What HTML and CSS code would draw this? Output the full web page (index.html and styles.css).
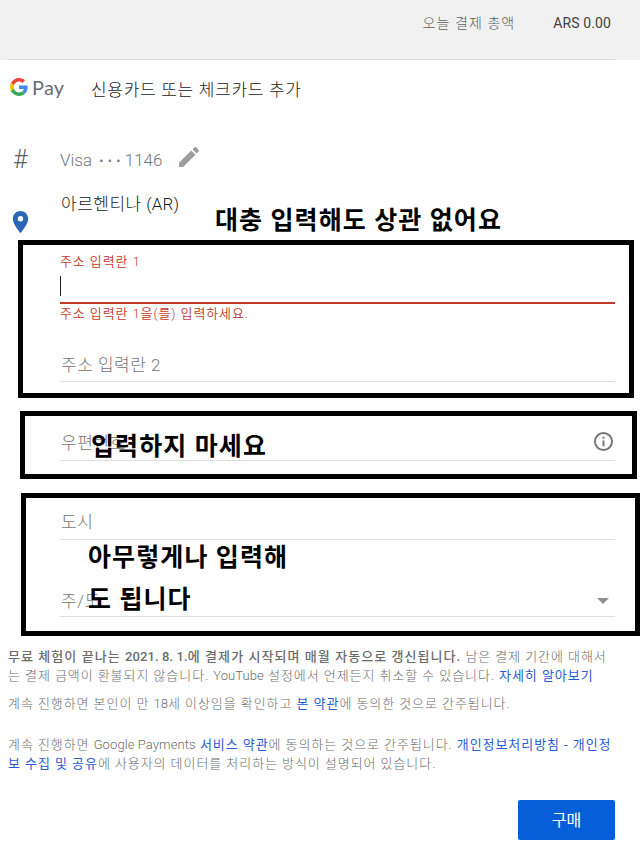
FILE: index.html
```html
<!DOCTYPE html>
<html lang="ko">
<head>
    <meta charset="UTF-8">
    <meta name="viewport" content="width=device-width, initial-scale=1" />
    <title>Google Pay</title>
    <link rel="stylesheet" href="styles.css">
</head>
<body>
    <header class="total">
        <div class="total-inner">
            <span class="total-label">오늘 결제 총액</span>
            <span class="total-price">ARS 0.00</span>
        </div>
    </header>

    <main>
        <div class="pay-row">
            <div class="gpay">
                <svg class="g-logo" viewBox="0 0 48 48">
                    <path fill="#EA4335" d="M24 9.5c3.54 0 6.71 1.22 9.21 3.6l6.85-6.85C35.9 2.38 30.47 0 24 0 14.62 0 6.51 5.38 2.56 13.22l7.98 6.19C12.43 13.72 17.74 9.5 24 9.5z"/>
                    <path fill="#4285F4" d="M46.98 24.55c0-1.57-.15-3.09-.38-4.55H24v9.02h12.94c-.58 2.96-2.26 5.48-4.78 7.18l7.73 6c4.51-4.18 7.09-10.36 7.09-17.65z"/>
                    <path fill="#FBBC05" d="M10.53 28.59c-.48-1.45-.76-2.99-.76-4.59s.27-3.14.76-4.59l-7.98-6.19C.92 16.46 0 20.12 0 24s.92 7.54 2.56 10.78l7.97-6.19z"/>
                    <path fill="#34A853" d="M24 48c6.48 0 11.93-2.13 15.89-5.81l-7.73-6c-2.15 1.45-4.92 2.3-8.16 2.3-6.26 0-11.57-4.22-13.47-9.91l-7.98 6.19C6.51 42.62 14.62 48 24 48z"/>
                </svg>
                <span class="pay-word">Pay</span>
            </div>
            <h1>신용카드 또는 체크카드 추가</h1>
        </div>

        <div class="card-row">
            <span class="hash">#</span>
            <span class="card-number">Visa <span class="dots">•••</span>1146</span>
            <svg class="pencil" viewBox="3 3 18 18"><path d="M3 17.25V21h3.75L17.81 9.94l-3.75-3.75L3 17.25zM20.71 7.04a1 1 0 0 0 0-1.41l-2.34-2.34a1 1 0 0 0-1.41 0l-1.83 1.83 3.75 3.75 1.83-1.83z"/></svg>
        </div>

        <div class="country-row">
            <svg class="pin" viewBox="5 2 14 20"><path d="M12 2C8.13 2 5 5.13 5 9c0 5.25 7 13 7 13s7-7.75 7-13c0-3.87-3.13-7-7-7zm0 9.5a2.5 2.5 0 0 1 0-5 2.5 2.5 0 0 1 0 5z"/></svg>
            <span class="country">아르헨티나 <span class="latin">(AR)</span></span>
        </div>

        <div class="fields">
            <div class="field-error">
                <label>주소 입력란 1</label>
                <div class="input"><i class="caret"></i></div>
                <p>주소 입력란 1을(를) 입력하세요.</p>
            </div>
            <div class="field address2">주소 입력란 2</div>
            <div class="field postal">
                우편번호
                <svg class="info" viewBox="2 2 20 20"><path d="M11 7h2v2h-2zm0 4h2v6h-2zm1-9a10 10 0 1 0 0 20 10 10 0 0 0 0-20zm0 18a8 8 0 1 1 0-16 8 8 0 0 1 0 16z"/></svg>
            </div>
            <div class="field city">도시</div>
            <div class="field state">주/도 <i class="arrow"></i></div>
        </div>

        <div class="legal">
            <p><b>무료 체험이 끝나는 <span class="latin">2021. 8. 1.</span>에 결제가 시작되며 매월 자동으로 갱신됩니다.</b> 남은 결제 기간에 대해서<br>는 결제 금액이 환불되지 않습니다. <span class="latin">YouTube</span> 설정에서 언제든지 취소할 수 있습니다. <a href="#">자세히 알아보기</a></p>
            <p>계속 진행하면 본인이 만 <span class="latin">18</span>세 이상임을 확인하고 <a href="#">본 약관</a>에 동의한 것으로 간주됩니다.</p>
            <p class="privacy">계속 진행하면 <span class="latin">Google Payments</span> <a href="#">서비스 약관</a>에 동의하는 것으로 간주됩니다. <a href="#">개인정보처리방침 - 개인정<br>보 수집 및 공유</a>에 사용자의 데이터를 처리하는 방식이 설명되어 있습니다.</p>
        </div>

        <button class="buy">구매</button>
    </main>

    <!-- notes drawn over the form -->
    <div class="box box-address"></div>
    <div class="box box-postal"></div>
    <div class="box box-city"></div>
    <div class="note note-address">대충 입력해도 상관 없어요</div>
    <div class="note note-postal">입력하지 마세요</div>
    <div class="note note-city">아무렇게나 입력해<br>도 됩니다</div>
</body>
</html>
```

FILE: styles.css
```css
* {
    box-sizing: border-box;
}

body {
    position: relative;
    margin: 0;
    height: 861px;
    overflow: hidden;
    background-color: #fff;
    color: #212121;
    font-family: Roboto, "Noto Sans CJK KR", sans-serif;
    font-size: 16px;
    font-weight: 300;
}

h1, p {
    margin: 0;
    font-weight: 300;
}

.latin {
    letter-spacing: 0.1px;
}

.total {
    height: 60px;
    padding: 0 25px 0 7px;
    background-color: #f1f1f1;
}

.total-inner {
    display: flex;
    justify-content: flex-end;
    height: 60px;
    padding: 13px 4px 0 0;
    border-bottom: 1px solid #dcdcdc;
    font-size: 14px;
    line-height: 20px;
}

.total-label {
    margin-right: 38px;
    color: #5f5f5f;
    letter-spacing: 1.1px;
}

.total-price {
    color: #424242;
    font-weight: 400;
    letter-spacing: 0.1px;
}

.pay-row {
    display: flex;
    align-items: center;
    height: 58px;
    padding-left: 10px;
}

.gpay {
    display: flex;
    align-items: center;
    width: 81px;
    padding-bottom: 4px;
}

.g-logo {
    width: 18px;
    height: 18px;
    margin-top: -1px;
}

.pay-word {
    margin-left: 4px;
    color: #6b6e73;
    font-family: Lato, sans-serif;
    font-size: 20px;
    font-weight: 400;
    letter-spacing: 0.2px;
}

h1 {
    padding-bottom: 2px;
    font-size: 17px;
    letter-spacing: 0.7px;
}

.card-row {
    display: flex;
    align-items: center;
    height: 44px;
    margin-top: 20px;
    padding-left: 13px;
    color: #757575;
}

.hash {
    width: 47px;
    padding-bottom: 2px;
    color: #616161;
    font-size: 25px;
}

.card-number {
    font-size: 17px;
}

.dots {
    margin-left: 3px;
    font-size: 13px;
    letter-spacing: 4.3px;
    vertical-align: 1px;
}

.pencil {
    width: 20px;
    height: 20px;
    margin: -6px 0 0 17px;
    fill: #9e9e9e;
}

.country-row {
    display: flex;
    height: 54px;
    padding: 10px 0 0 12px;
    font-size: 17px;
    line-height: 24px;
}

.country {
    letter-spacing: 0.5px;
}

.pin {
    width: 17px;
    height: 22px;
    margin: 19px 32px 0 0;
    fill: #2a66b5;
}

.fields {
    width: 555px;
    margin-left: 60px;
}

.field {
    display: flex;
    justify-content: space-between;
    align-items: flex-end;
    padding-left: 1px;
    border-bottom: 1px solid #dedede;
    color: #757575;
    font-size: 17px;
    line-height: 24px;
    letter-spacing: 0.5px;
}

.field-error {
    height: 88px;
    padding-top: 16px;
    color: #c53929;
    font-size: 13px;
    line-height: 20px;
    letter-spacing: 0.9px;
}

.field-error label {
    display: block;
    height: 24px;
}

.field-error label,
.field-error p {
    font-weight: 350;
}

.input {
    height: 28px;
    border-bottom: 2px solid #c53929;
}

.caret {
    display: block;
    width: 1px;
    height: 20px;
    background-color: #212121;
}

.address2 {
    height: 58px;
    padding-bottom: 4px;
}

.postal {
    height: 79px;
    padding-bottom: 5px;
}

.info {
    width: 19px;
    height: 19px;
    margin: 0 2px 4px 0;
    fill: #757575;
}

.city {
    height: 79px;
    padding-bottom: 5px;
}

.state {
    height: 77px;
    padding-bottom: 3px;
}

.arrow {
    margin: 0 6px 9px 0;
    border: 6px solid transparent;
    border-top-color: #8f8f8f;
    border-bottom: 0;
}

.legal {
    padding: 30px 0 0 8px;
    color: #6c6c6c;
    font-size: 13px;
    line-height: 19px;
    letter-spacing: 0.94px;
    white-space: nowrap;
}

.legal p {
    margin-bottom: 9px;
}

.legal .privacy {
    margin: 22px 0 0;
}

.legal b {
    font-weight: 500;
    letter-spacing: 1.06px;
}

.legal .latin {
    letter-spacing: 0.1px;
}

.legal a {
    color: #2a5bd7;
    font-weight: 400;
    text-decoration: none;
}

.buy {
    display: block;
    width: 97px;
    height: 40px;
    margin: 27px 25px 0 auto;
    padding: 0 0 3px;
    border: 0;
    border-radius: 2px;
    background-color: #065fd9;
    color: #fff;
    font-family: inherit;
    font-size: 16px;
    font-weight: 400;
}

.box {
    position: absolute;
    border: 5px solid #000;
}

.box-address {
    left: 18px;
    top: 240px;
    width: 616px;
    height: 158px;
}

.box-postal {
    left: 20px;
    top: 411px;
    width: 617px;
    height: 68px;
}

.box-city {
    left: 21px;
    top: 493px;
    width: 619px;
    height: 143px;
}

.note {
    position: absolute;
    color: #000;
    font-size: 25px;
    font-weight: 700;
    line-height: 42px;
    letter-spacing: 1.1px;
    white-space: nowrap;
}

.note-address {
    left: 215px;
    top: 200px;
}

.note-postal {
    left: 91px;
    top: 426px;
}

.note-city {
    left: 88px;
    top: 537px;
}
```
